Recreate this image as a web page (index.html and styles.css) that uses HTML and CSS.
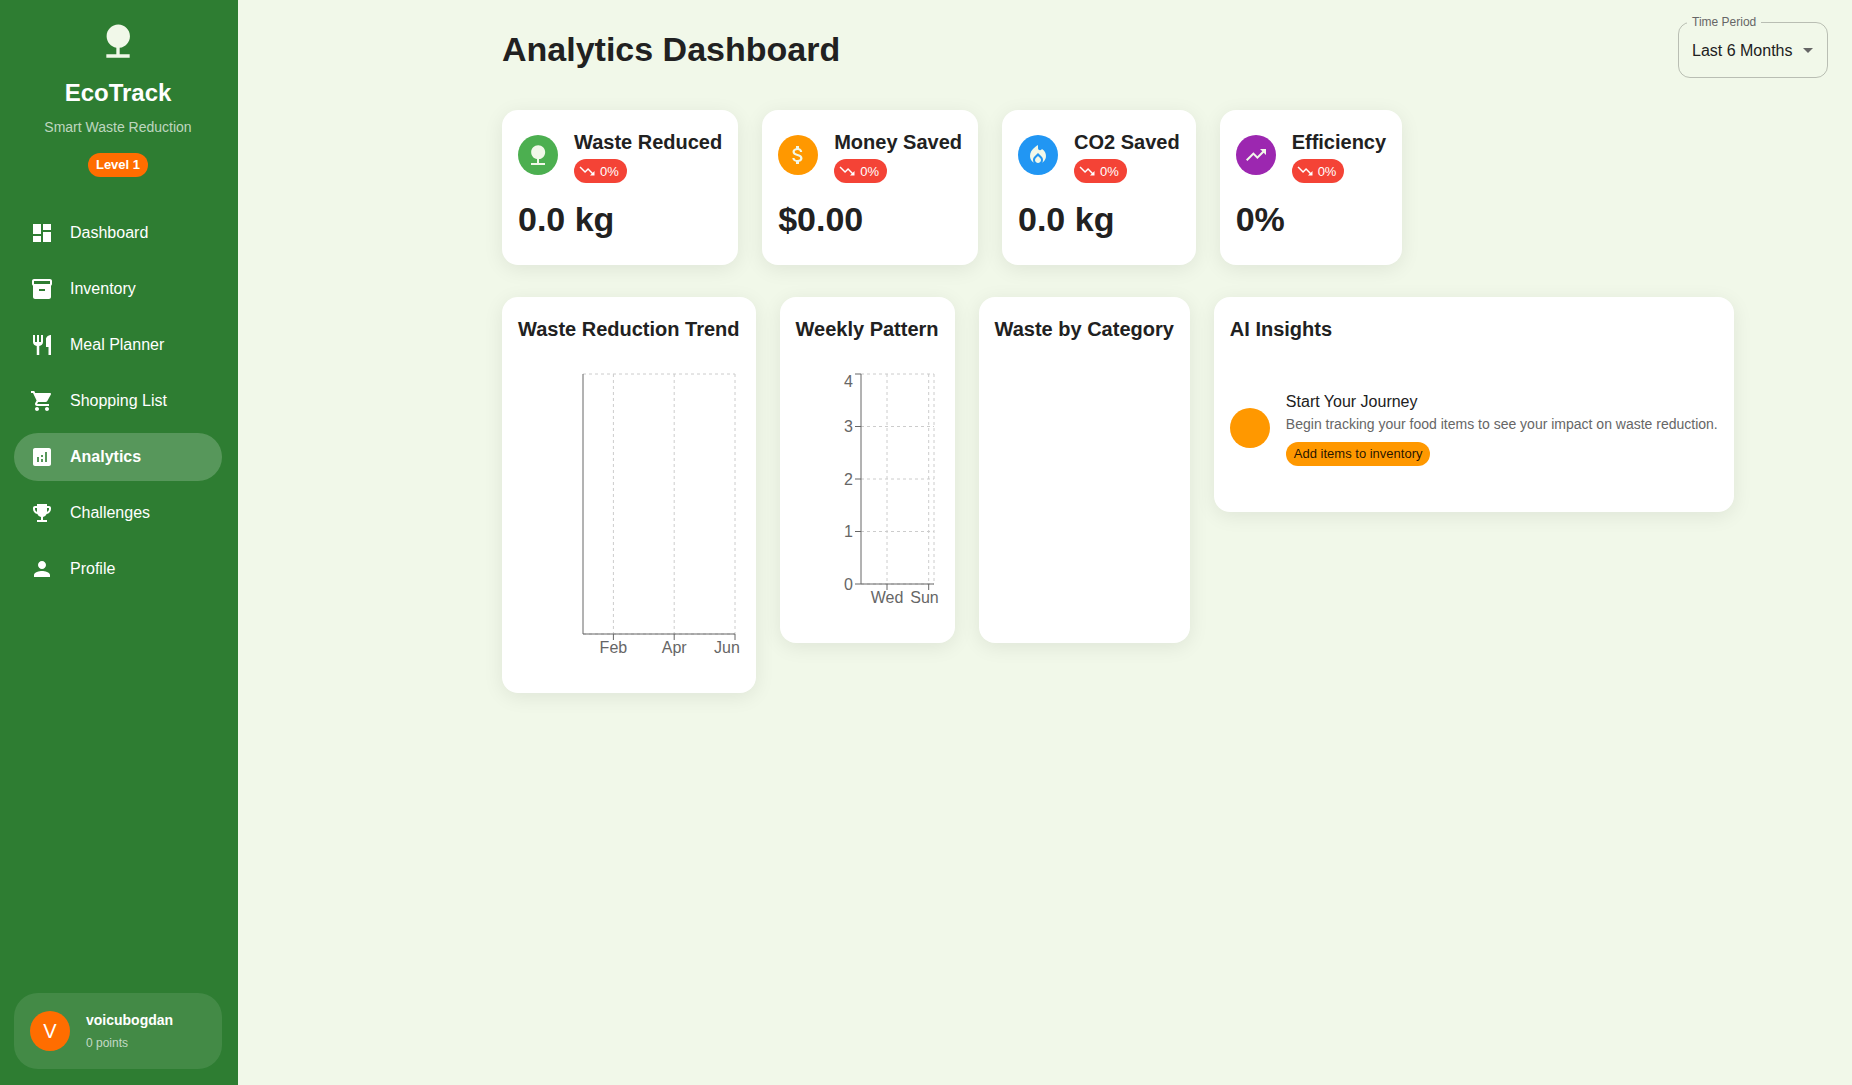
FILE: index.html
```html
<!DOCTYPE html>
<html lang="en">
<head>
    <meta charset="UTF-8">
    <meta name="viewport" content="width=device-width, initial-scale=1.0">
    <title>EcoTrack - Analytics</title>
    <link rel="stylesheet" href="styles.css">
</head>
<body>
    <aside class="sidebar">
        <div class="brand">
            <svg class="brand-logo" viewBox="0 0 24 24"><path d="M13 16.12c3.47-.41 6.17-3.36 6.17-6.95 0-3.87-3.13-7-7-7s-7 3.13-7 7c0 3.47 2.52 6.34 5.83 6.89V20H5v2h14v-2h-6v-3.88z"/></svg>
            <div class="brand-name">EcoTrack</div>
            <div class="brand-tag">Smart Waste Reduction</div>
            <span class="level-chip">Level 1</span>
        </div>

        <nav class="nav">
            <a class="nav-item" href="#">
                <svg class="nav-icon" viewBox="0 0 24 24"><path d="M3 13h8V3H3v10zm0 8h8v-6H3v6zm10 0h8V11h-8v10zm0-18v6h8V3h-8z"/></svg>
                Dashboard
            </a>
            <a class="nav-item" href="#">
                <svg class="nav-icon" viewBox="0 0 24 24"><path d="M20 2H4c-1 0-2 .9-2 2v3.01c0 .72.43 1.34 1 1.69V20c0 1.1 1.1 2 2 2h14c.9 0 2-.9 2-2V8.7c.57-.35 1-.97 1-1.69V4c0-1.1-1-2-2-2zm-5 12H9v-2h6v2zm5-7H4V4l16-.02V7z"/></svg>
                Inventory
            </a>
            <a class="nav-item" href="#">
                <svg class="nav-icon" viewBox="0 0 24 24"><path d="M11 9H9V2H7v7H5V2H3v7c0 2.12 1.66 3.84 3.75 3.97V22h2.5v-9.03C11.34 12.84 13 11.12 13 9V2h-2v7zm5-3v8h2.5v8H21V2c-2.76 0-5 2.24-5 4z"/></svg>
                Meal Planner
            </a>
            <a class="nav-item" href="#">
                <svg class="nav-icon" viewBox="0 0 24 24"><path d="M7 18c-1.1 0-1.99.9-1.99 2S5.9 22 7 22s2-.9 2-2-.9-2-2-2zM1 2v2h2l3.6 7.59-1.35 2.45c-.16.28-.25.61-.25.96 0 1.1.9 2 2 2h12v-2H7.42c-.14 0-.25-.11-.25-.25l.03-.12.9-1.63h7.45c.75 0 1.41-.41 1.75-1.03l3.58-6.49c.08-.14.12-.31.12-.48 0-.55-.45-1-1-1H5.21l-.94-2H1zm16 16c-1.1 0-1.99.9-1.99 2s.89 2 1.99 2 2-.9 2-2-.9-2-2-2z"/></svg>
                Shopping List
            </a>
            <a class="nav-item active" href="#">
                <svg class="nav-icon" viewBox="0 0 24 24"><path d="M19 3H5c-1.1 0-2 .9-2 2v14c0 1.1.9 2 2 2h14c1.1 0 2-.9 2-2V5c0-1.1-.9-2-2-2zM9 17H7v-5h2v5zm4 0h-2v-3h2v3zm0-5h-2v-2h2v2zm4 5h-2V7h2v10z"/></svg>
                Analytics
            </a>
            <a class="nav-item" href="#">
                <svg class="nav-icon" viewBox="0 0 24 24"><path d="M19 5h-2V3H7v2H5c-1.1 0-2 .9-2 2v1c0 2.55 1.92 4.63 4.39 4.94.63 1.5 1.98 2.63 3.61 2.96V19H7v2h10v-2h-4v-3.1c1.63-.33 2.98-1.46 3.61-2.96C19.08 12.63 21 10.55 21 8V7c0-1.1-.9-2-2-2zM5 8V7h2v3.82C5.84 10.4 5 9.3 5 8zm14 0c0 1.3-.84 2.4-2 2.82V7h2v1z"/></svg>
                Challenges
            </a>
            <a class="nav-item" href="#">
                <svg class="nav-icon" viewBox="0 0 24 24"><path d="M12 12c2.21 0 4-1.79 4-4s-1.79-4-4-4-4 1.79-4 4 1.79 4 4 4zm0 2c-2.67 0-8 1.34-8 4v2h16v-2c0-2.66-5.33-4-8-4z"/></svg>
                Profile
            </a>
        </nav>

        <div class="user-card">
            <div class="avatar">V</div>
            <div>
                <div class="user-name">voicubogdan</div>
                <div class="user-points">0 points</div>
            </div>
        </div>
    </aside>

    <main class="main">
        <header class="page-head">
            <h1 class="page-title">Analytics Dashboard</h1>
            <div class="period">
                <span class="period-label">Time Period</span>
                <span class="period-value">Last 6 Months</span>
                <svg class="period-arrow" viewBox="0 0 24 24"><path d="M7 10l5 5 5-5z"/></svg>
            </div>
        </header>

        <section class="stat-row">
            <div class="card stat">
                <div class="stat-top">
                    <span class="stat-icon green">
                        <svg viewBox="0 0 24 24"><path d="M13 16.12c3.47-.41 6.17-3.36 6.17-6.95 0-3.87-3.13-7-7-7s-7 3.13-7 7c0 3.47 2.52 6.34 5.83 6.89V20H5v2h14v-2h-6v-3.88z"/></svg>
                    </span>
                    <div>
                        <div class="card-title">Waste Reduced</div>
                        <span class="trend">
                            <svg viewBox="0 0 24 24"><path d="M16 18l2.29-2.29-4.88-4.88-4 4L2 7.41 3.41 6l6 6 4-4 6.3 6.29L22 12v6z"/></svg>
                            0%
                        </span>
                    </div>
                </div>
                <div class="stat-value">0.0 kg</div>
            </div>
            <div class="card stat">
                <div class="stat-top">
                    <span class="stat-icon orange">
                        <svg viewBox="0 0 24 24"><path d="M11.8 10.9c-2.27-.59-3-1.2-3-2.15 0-1.09 1.01-1.85 2.7-1.85 1.78 0 2.44.85 2.5 2.1h2.21c-.07-1.72-1.12-3.3-3.21-3.81V3h-3v2.16c-1.94.42-3.5 1.68-3.5 3.61 0 2.31 1.91 3.46 4.7 4.13 2.5.6 3 1.48 3 2.41 0 .69-.49 1.79-2.7 1.79-2.06 0-2.87-.92-2.98-2.1h-2.2c.12 2.19 1.76 3.42 3.68 3.83V21h3v-2.15c1.95-.37 3.5-1.5 3.5-3.55 0-2.84-2.43-3.81-4.7-4.4z"/></svg>
                    </span>
                    <div>
                        <div class="card-title">Money Saved</div>
                        <span class="trend">
                            <svg viewBox="0 0 24 24"><path d="M16 18l2.29-2.29-4.88-4.88-4 4L2 7.41 3.41 6l6 6 4-4 6.3 6.29L22 12v6z"/></svg>
                            0%
                        </span>
                    </div>
                </div>
                <div class="stat-value">$0.00</div>
            </div>
            <div class="card stat">
                <div class="stat-top">
                    <span class="stat-icon blue">
                        <svg viewBox="0 0 24 24"><path d="M12 12.9l-2.13 2.09C9.31 15.55 9 16.28 9 17.06 9 18.68 10.35 20 12 20s3-1.32 3-2.94c0-.78-.31-1.52-.87-2.07L12 12.9z"/><path d="M16 6l-.44.55C14.38 8.02 12 7.19 12 5.3V2S4 6 4 13c0 2.92 1.56 5.47 3.89 6.86-.56-.79-.89-1.76-.89-2.8 0-1.32.52-2.56 1.47-3.5L12 10.1l3.53 3.47c.95.93 1.47 2.17 1.47 3.5 0 1.02-.31 1.96-.85 2.75 1.89-1.15 3.29-3.06 3.71-5.3.66-3.55-1.07-6.9-3.86-8.52z"/></svg>
                    </span>
                    <div>
                        <div class="card-title">CO2 Saved</div>
                        <span class="trend">
                            <svg viewBox="0 0 24 24"><path d="M16 18l2.29-2.29-4.88-4.88-4 4L2 7.41 3.41 6l6 6 4-4 6.3 6.29L22 12v6z"/></svg>
                            0%
                        </span>
                    </div>
                </div>
                <div class="stat-value">0.0 kg</div>
            </div>
            <div class="card stat">
                <div class="stat-top">
                    <span class="stat-icon purple">
                        <svg viewBox="0 0 24 24"><path d="M16 6l2.29 2.29-4.88 4.88-4-4L2 16.59 3.41 18l6-6 4 4 6.3-6.29L22 12V6z"/></svg>
                    </span>
                    <div>
                        <div class="card-title">Efficiency</div>
                        <span class="trend">
                            <svg viewBox="0 0 24 24"><path d="M16 18l2.29-2.29-4.88-4.88-4 4L2 7.41 3.41 6l6 6 4-4 6.3 6.29L22 12v6z"/></svg>
                            0%
                        </span>
                    </div>
                </div>
                <div class="stat-value">0%</div>
            </div>
        </section>

        <section class="chart-row">
            <div class="card panel">
                <div class="card-title">Waste Reduction Trend</div>
                <svg class="chart" height="300">
                    <g class="grid">
                        <line x1="65" y1="5" x2="217" y2="5"/>
                        <line x1="65" y1="265" x2="217" y2="265"/>
                        <line x1="95.4" y1="5" x2="95.4" y2="265"/>
                        <line x1="156.2" y1="5" x2="156.2" y2="265"/>
                        <line x1="217" y1="5" x2="217" y2="265"/>
                    </g>
                    <g class="axis">
                        <line x1="65" y1="5" x2="65" y2="265"/>
                        <line x1="65" y1="265" x2="217" y2="265"/>
                        <line x1="95.4" y1="265" x2="95.4" y2="271"/>
                        <line x1="156.2" y1="265" x2="156.2" y2="271"/>
                        <line x1="217" y1="265" x2="217" y2="271"/>
                    </g>
                    <g class="tick-text">
                        <text x="95.4" y="273" dy=".71em">Feb</text>
                        <text x="156.2" y="273" dy=".71em">Apr</text>
                        <text x="209" y="273" dy=".71em">Jun</text>
                    </g>
                </svg>
            </div>

            <div class="card panel">
                <div class="card-title">Weekly Pattern</div>
                <svg class="chart" height="250">
                    <g class="grid">
                        <line x1="65" y1="5" x2="138" y2="5"/>
                        <line x1="65" y1="57.5" x2="138" y2="57.5"/>
                        <line x1="65" y1="110" x2="138" y2="110"/>
                        <line x1="65" y1="162.5" x2="138" y2="162.5"/>
                        <line x1="65" y1="215" x2="138" y2="215"/>
                        <line x1="91" y1="5" x2="91" y2="215"/>
                        <line x1="132.7" y1="5" x2="132.7" y2="215"/>
                        <line x1="138" y1="5" x2="138" y2="215"/>
                    </g>
                    <g class="axis">
                        <line x1="65" y1="5" x2="65" y2="215"/>
                        <line x1="65" y1="215" x2="138" y2="215"/>
                        <line x1="59" y1="5" x2="65" y2="5"/>
                        <line x1="59" y1="57.5" x2="65" y2="57.5"/>
                        <line x1="59" y1="110" x2="65" y2="110"/>
                        <line x1="59" y1="162.5" x2="65" y2="162.5"/>
                        <line x1="59" y1="215" x2="65" y2="215"/>
                        <line x1="91" y1="215" x2="91" y2="221"/>
                        <line x1="132.7" y1="215" x2="132.7" y2="221"/>
                    </g>
                    <g class="tick-text tick-left">
                        <text x="57" y="12.5" dy=".355em">4</text>
                        <text x="57" y="57.5" dy=".355em">3</text>
                        <text x="57" y="110" dy=".355em">2</text>
                        <text x="57" y="162.5" dy=".355em">1</text>
                        <text x="57" y="215" dy=".355em">0</text>
                    </g>
                    <g class="tick-text">
                        <text x="91" y="223" dy=".71em">Wed</text>
                        <text x="128.5" y="223" dy=".71em">Sun</text>
                    </g>
                </svg>
            </div>

            <div class="card panel">
                <div class="card-title">Waste by Category</div>
                <div class="chart-empty"></div>
            </div>

            <div class="card panel insights">
                <div class="card-title">AI Insights</div>
                <div class="insight">
                    <span class="insight-dot"></span>
                    <div>
                        <div class="insight-title">Start Your Journey</div>
                        <div class="insight-text">Begin tracking your food items to see your impact on waste reduction.</div>
                        <span class="insight-chip">Add items to inventory</span>
                    </div>
                </div>
            </div>
        </section>
    </main>
</body>
</html>
```

FILE: styles.css
```css
/* General */
* {
    box-sizing: border-box;
}

body {
    margin: 0;
    height: 1085px;
    display: flex;
    overflow: hidden;
    font-family: "Liberation Sans", Arial, sans-serif;
    color: #212121;
    background-color: #f1f8e9;
}

/* Sidebar */
.sidebar {
    width: 238px;
    flex-shrink: 0;
    padding: 0 16px 0 14px;
    display: flex;
    flex-direction: column;
    background-color: #2e7d32;
    color: white;
}

.brand {
    display: flex;
    flex-direction: column;
    align-items: center;
    padding-top: 21px;
}

.brand-logo {
    width: 40px;
    height: 40px;
    fill: #f1f8e9;
}

.brand-name {
    margin-top: 16px;
    font-size: 24px;
    font-weight: 700;
    line-height: 32px;
}

.brand-tag {
    margin-top: 8px;
    font-size: 14px;
    line-height: 20px;
    color: rgba(255, 255, 255, 0.7);
}

.level-chip {
    margin-top: 16px;
    height: 24px;
    padding: 0 8px;
    border-radius: 12px;
    font-size: 13px;
    font-weight: 700;
    line-height: 24px;
    background-color: #ff6d00;
}

.nav {
    margin-top: 32px;
    display: flex;
    flex-direction: column;
    gap: 8px;
}

.nav-item {
    height: 48px;
    padding: 0 16px;
    display: flex;
    align-items: center;
    gap: 16px;
    border-radius: 24px;
    font-size: 16px;
    color: white;
    text-decoration: none;
}

.nav-item.active {
    font-weight: 700;
    background-color: rgba(255, 255, 255, 0.2);
}

.nav-icon {
    width: 24px;
    height: 24px;
    fill: white;
}

.user-card {
    margin-top: auto;
    margin-bottom: 16px;
    height: 76px;
    padding: 0 16px;
    display: flex;
    align-items: center;
    gap: 16px;
    border-radius: 24px;
    background-color: rgba(255, 255, 255, 0.1);
}

.avatar {
    width: 40px;
    height: 40px;
    border-radius: 50%;
    display: flex;
    align-items: center;
    justify-content: center;
    font-size: 20px;
    background-color: #ff6d00;
}

.user-name {
    font-size: 14px;
    font-weight: 700;
    line-height: 20px;
}

.user-points {
    margin-top: 3px;
    font-size: 12px;
    line-height: 20px;
    color: rgba(255, 255, 255, 0.7);
}

/* Main */
.main {
    flex: 1;
    padding: 22px 24px 0 264px;
}

.page-head {
    display: flex;
    align-items: center;
    justify-content: space-between;
    margin-bottom: 32px;
}

.page-title {
    margin: 0 0 2px;
    font-size: 34px;
    font-weight: 700;
    line-height: 42px;
}

.period {
    position: relative;
    width: 150px;
    height: 56px;
    padding: 0 13px;
    display: flex;
    align-items: center;
    justify-content: space-between;
    border: 1px solid rgba(0, 0, 0, 0.23);
    border-radius: 12px;
}

.period-label {
    position: absolute;
    top: -8px;
    left: 8px;
    padding: 0 5px;
    font-size: 12px;
    line-height: 14px;
    color: #666;
    background-color: #f1f8e9;
}

.period-value {
    padding-top: 1px;
    font-size: 16px;
}

.period-arrow {
    width: 24px;
    height: 24px;
    margin-right: -6px;
    fill: #666;
}

/* Cards */
.card {
    border-radius: 16px;
    background-color: white;
    box-shadow: 0 4px 20px rgba(0, 0, 0, 0.08);
}

.card-title {
    font-size: 20px;
    font-weight: 700;
    line-height: 32px;
    white-space: nowrap;
}

.stat-row {
    display: flex;
    gap: 24px;
    margin-bottom: 32px;
}

.stat {
    height: 155px;
    padding: 16px;
}

.stat-top {
    display: flex;
    align-items: center;
    gap: 16px;
}

.stat-icon {
    width: 40px;
    height: 40px;
    border-radius: 50%;
    display: flex;
    align-items: center;
    justify-content: center;
}

.stat-icon svg {
    width: 24px;
    height: 24px;
    fill: #f1f8e9;
}

.green {
    background-color: #4caf50;
}

.orange {
    background-color: #ff9800;
}

.blue {
    background-color: #2196f3;
}

.purple {
    background-color: #9c27b0;
}

.trend {
    margin-top: 1px;
    height: 24px;
    padding: 0 8px 0 4px;
    display: inline-flex;
    align-items: center;
    gap: 4px;
    vertical-align: top;
    border-radius: 12px;
    font-size: 13px;
    color: white;
    background-color: #f44336;
}

.trend svg {
    width: 18px;
    height: 18px;
    fill: white;
}

.stat-value {
    margin-top: 15px;
    font-size: 34px;
    font-weight: 700;
    line-height: 42px;
}

/* Charts */
.chart-row {
    display: flex;
    align-items: flex-start;
    gap: 24px;
}

.panel {
    padding: 16px 16px 24px;
}

.chart {
    display: block;
    width: 0;
    min-width: 100%;
    margin-top: 24px;
}

.grid line {
    stroke: #ccc;
    stroke-dasharray: 3 3;
}

.axis line {
    stroke: #666;
}

.tick-text text {
    font-size: 16px;
    fill: #666;
    text-anchor: middle;
}

.tick-left text {
    text-anchor: end;
}

.chart-empty {
    height: 250px;
    margin-top: 24px;
}

/* AI insights */
.insights {
    padding-bottom: 46px;
}

.insight {
    margin-top: 45px;
    display: flex;
    align-items: center;
    gap: 16px;
}

.insight-dot {
    width: 40px;
    height: 40px;
    border-radius: 50%;
    background-color: #ff9800;
}

.insight-title {
    font-size: 16px;
    line-height: 24px;
}

.insight-text {
    font-size: 14px;
    line-height: 20px;
    color: #666;
    white-space: nowrap;
}

.insight-chip {
    display: inline-block;
    margin-top: 8px;
    height: 24px;
    padding: 0 8px;
    border-radius: 12px;
    font-size: 13px;
    line-height: 24px;
    color: rgba(0, 0, 0, 0.87);
    background-color: #ff9800;
}
```
